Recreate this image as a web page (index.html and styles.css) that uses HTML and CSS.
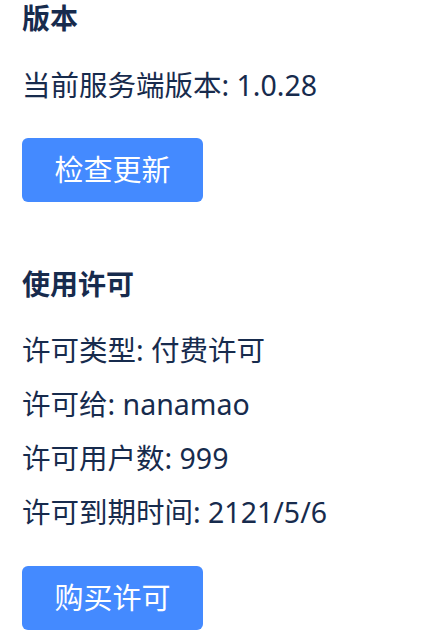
FILE: index.html
```html
<!DOCTYPE html>
<html lang="zh-CN">
<head>
<meta charset="utf-8">
<title>版本</title>
<link rel="stylesheet" href="styles.css">
</head>
<body>
<main class="page">
  <section class="section">
    <h2 class="title">版本</h2>
    <p class="line first">当前服务端版本: 1.0.28</p>
    <button class="btn" type="button">检查更新</button>
  </section>
  <section class="section license">
    <h2 class="title">使用许可</h2>
    <p class="line first">许可类型: 付费许可</p>
    <p class="line">许可给: nanamao</p>
    <p class="line">许可用户数: 999</p>
    <p class="line">许可到期时间: 2121/5/6</p>
    <button class="btn btn-buy" type="button">购买许可</button>
  </section>
</main>
</body>
</html>
```

FILE: styles.css
```css
html, body {
  margin: 0;
  padding: 0;
  background: #ffffff;
}

body {
  font-family: "Noto Sans", "Noto Sans CJK SC", sans-serif;
  font-size: 28.5px;
  color: #172b4d;
}

.page {
  padding: 0 22px;
}

.section {
  display: flex;
  flex-direction: column;
  align-items: flex-start;
}

.license {
  margin-top: 64px;
}

.title {
  margin: 0;
  font-size: 28px;
  font-weight: 700;
  line-height: 36px;
}

.line {
  margin: 0;
  line-height: 54px;
  white-space: nowrap;
}

.line.first {
  margin-top: 22px;
}

.license .line.first {
  margin-top: 21px;
}

.btn {
  margin-top: 26px;
  height: 64px;
  width: 181px;
  padding: 0;
  border: none;
  border-radius: 6px;
  background: #448aff;
  color: #ffffff;
  font-family: "Noto Sans", "Noto Sans CJK SC", sans-serif;
  font-size: 29px;
  line-height: 64px;
  text-align: center;
  cursor: pointer;
}

.btn-buy {
  margin-top: 27px;
}
```
